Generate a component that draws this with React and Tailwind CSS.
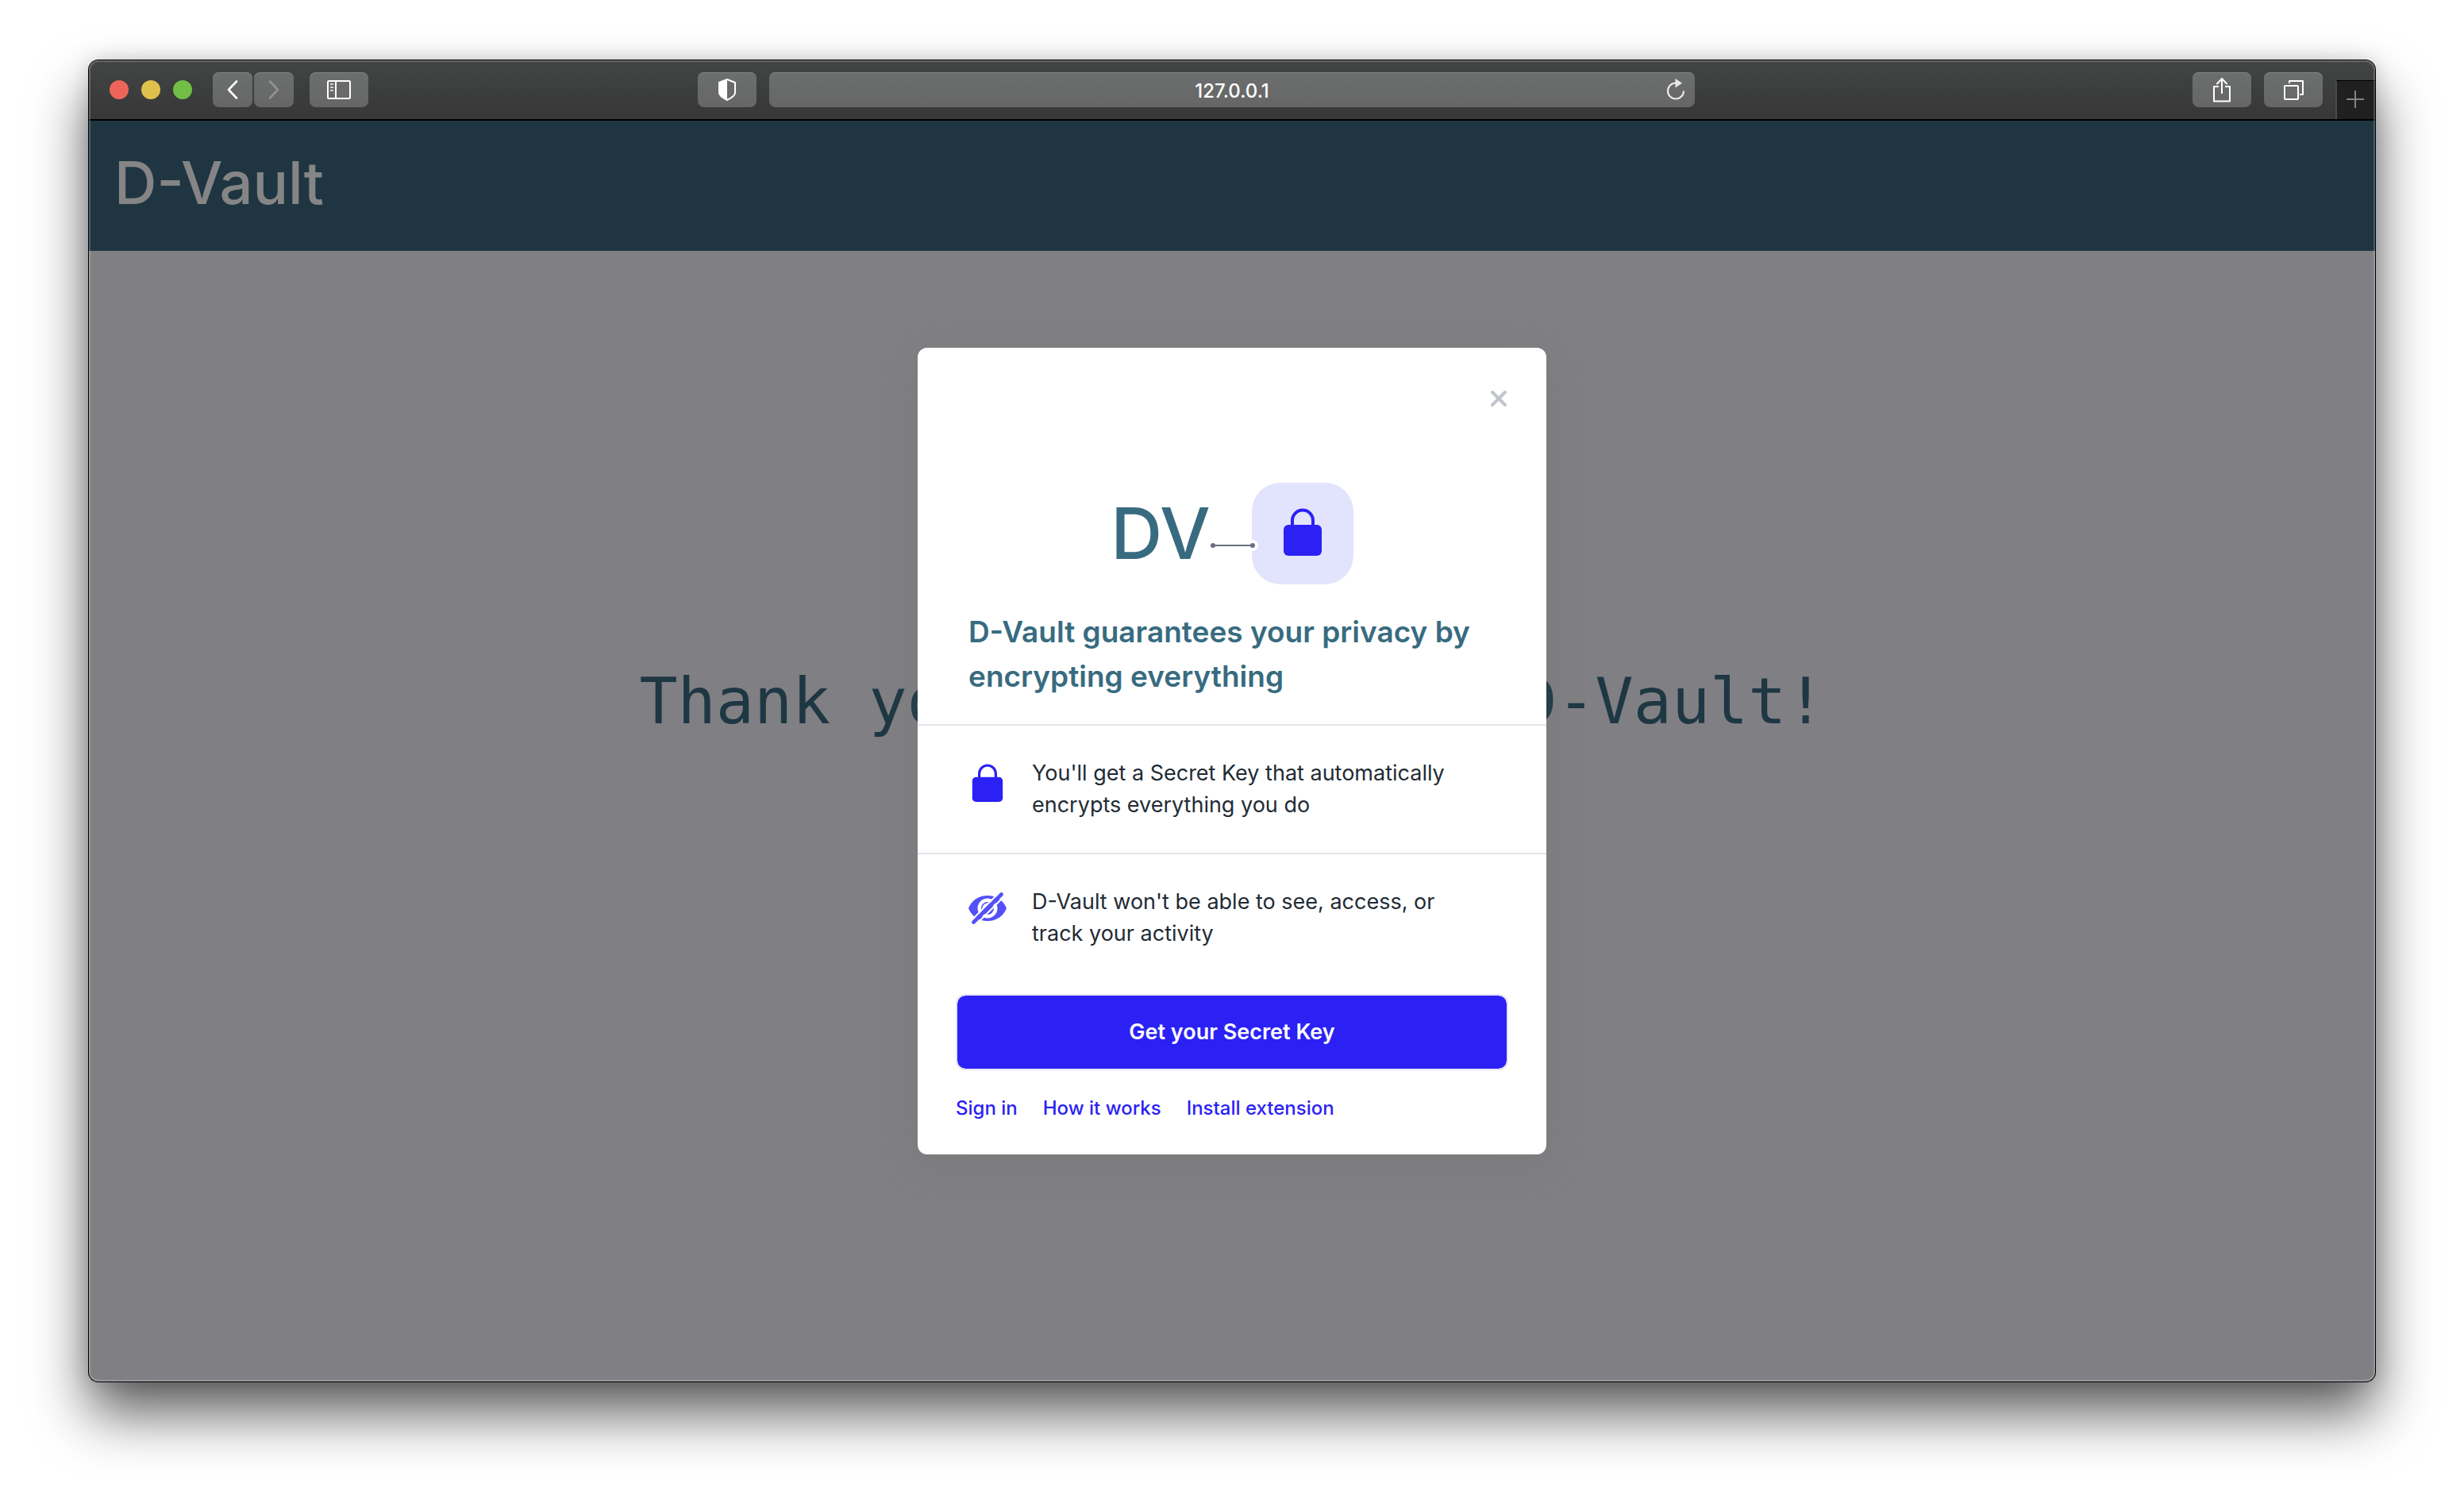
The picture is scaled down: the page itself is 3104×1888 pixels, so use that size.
import React from "react";

const toolButton =
  "flex h-11 items-center justify-center rounded-lg bg-linear-to-b from-[#6d6e6f] to-[#656665] shadow-[inset_0_1px_0_#828383]";

function Lock({ className }) {
  return (
    <svg viewBox="0 0 48 60" className={className} fill="none" aria-hidden="true">
      <path d="M11 24V15.5a13 13 0 0 1 26 0V24" stroke="#2b21f5" strokeWidth="4" />
      <rect x="0" y="21" width="48" height="39" rx="6" fill="#2b21f5" />
    </svg>
  );
}

function EyeOff() {
  return (
    <svg viewBox="0 0 48 40" className="h-10 w-12" fill="none" aria-hidden="true">
      <path
        d="M0 20C4 10 13 4 24 4s20 6 24 16c-4 10-13 16-24 16S4 30 0 20Z"
        fill="#544ff8"
      />
      <circle cx="24" cy="20" r="12.5" fill="#fff" />
      <circle cx="24" cy="20" r="8" fill="#544ff8" />
      <path d="M18.5 20a5.5 5.5 0 0 1 5.5-5.5" stroke="#fff" strokeWidth="2" strokeLinecap="round" />
      <path d="M3 36 39 0M9 41 45 5" stroke="#fff" strokeWidth="2" />
      <path d="M6.5 37.500 41.500 2.500" stroke="#544ff8" strokeWidth="4.600" strokeLinecap="round" />
    </svg>
  );
}

function Toolbar() {
  return (
    <header className="flex h-[76px] items-stretch border-b-2 border-black bg-linear-to-b from-[#434445] to-[#363736]">
      <div className="flex flex-1 items-center pb-px">
        <div className="ml-[26px] flex gap-4">
          <button aria-label="Close window" className="size-6 rounded-full bg-[#ed655a]" />
          <button aria-label="Minimize window" className="size-6 rounded-full bg-[#e0c04c]" />
          <button aria-label="Zoom window" className="size-6 rounded-full bg-[#72be47]" />
        </div>
        <div className="ml-[26px] flex gap-0.5">
          <button aria-label="Back" className={`${toolButton} w-[50px]`}>
            <svg viewBox="0 0 16 26" className="h-[26px] w-4" fill="none">
              <path d="M13 2.5 3 13l10 10.500" stroke="#fff" strokeWidth="2.600" strokeLinecap="round" strokeLinejoin="round" />
            </svg>
          </button>
          <button aria-label="Forward" className={`${toolButton} w-[50px]`}>
            <svg viewBox="0 0 16 26" className="h-[26px] w-4" fill="none">
              <path d="m3 2.500 10 10.500L3 23.500" stroke="#929292" strokeWidth="2.600" strokeLinecap="round" strokeLinejoin="round" />
            </svg>
          </button>
        </div>
        <button aria-label="Sidebar" className={`${toolButton} ml-5 w-[74px]`}>
          <svg viewBox="0 0 30 24" className="h-6 w-[30px]" fill="none">
            <rect x="1" y="1" width="28" height="22" rx="1.500" stroke="#fff" strokeWidth="2" />
            <path d="M11 1v22" stroke="#fff" strokeWidth="2" />
            <path d="M4 5h4M4 9h4M4 13h4" stroke="#d0d0d0" strokeWidth="2" />
          </svg>
        </button>
        <button aria-label="Privacy report" className={`${toolButton} mr-4 ml-auto w-[74px]`}>
          <svg viewBox="0 0 24 28" className="h-7 w-6" fill="none">
            <path d="M12 1 22 5v13c0 3.500-5 6.500-10 9C7 24.500 2 21.500 2 18V5Z" stroke="#fff" strokeWidth="2" strokeLinejoin="round" />
            <path d="M12 1 2 5v13c0 3.500 5 6.500 10 9Z" fill="#fff" />
          </svg>
        </button>
      </div>
      <div className="flex w-[41%] max-w-[1166px] items-center pb-px">
        <div className={`${toolButton} w-full pr-3`}>
          <input
            aria-label="Address"
            defaultValue="127.0.0.1"
            className="min-w-0 flex-1 bg-transparent pt-1 pl-9 text-center text-[24px] leading-8 font-medium text-white outline-none"
          />
          <button aria-label="Reload">
            <svg viewBox="0 0 24 28" className="h-7 w-6" fill="none">
              <path d="M22 15.500A10 10 0 1 1 12 5.500" stroke="#e8e8e8" strokeWidth="2.200" />
              <path d="M11.500 0v11.500L20 5.800Z" fill="#e8e8e8" />
            </svg>
          </button>
        </div>
      </div>
      <div className="flex flex-1 justify-end gap-4">
        <div className="flex items-center gap-4 pb-px">
          <button aria-label="Share" className={`${toolButton} w-[74px]`}>
            <svg viewBox="0 0 24 32" className="h-8 w-6" fill="none" stroke="#fff" strokeWidth="2" strokeLinejoin="round">
              <path d="M8 12H2v18.500h20V12h-6M12 21V3" />
              <path d="m6 8.500 6-6.500 6 6.500" strokeLinecap="round" />
            </svg>
          </button>
          <button aria-label="Tab overview" className={`${toolButton} w-[74px]`}>
            <svg viewBox="0 0 26 26" className="size-[26px]" fill="none" stroke="#fff" strokeWidth="2" strokeLinejoin="round">
              <rect x="2" y="8" width="17" height="17" rx="1" />
              <path d="M8 5V2h17v17h-4" />
            </svg>
          </button>
        </div>
        <button
          aria-label="New tab"
          className="mt-[25px] flex w-[50px] items-center justify-center border-t border-l-2 border-t-black border-l-[#4a4a4a] bg-[#202020] pb-0.5 pr-0.5"
        >
          <svg viewBox="0 0 22 22" className="size-[22px]" fill="none" stroke="#858585" strokeWidth="2">
            <path d="M11 0v22M0 11h22" />
          </svg>
        </button>
      </div>
    </header>
  );
}

function Feature({ icon, children }) {
  return (
    <li className="flex gap-8 border-t-2 border-[#e4e4ea] py-10 pr-20 pl-16">
      <span className="flex w-12 shrink-0 justify-center pt-2">{icon}</span>
      <p className="text-[27px] leading-10 text-[#222b35]">{children}</p>
    </li>
  );
}

function SecretKeyDialog() {
  return (
    <section
      role="dialog"
      aria-labelledby="dialog-title"
      className="relative w-[792px] rounded-xl bg-white pt-[170px] pb-[38px] shadow-[0_12px_48px_rgba(105,115,110,0.3)]"
    >
      <button aria-label="Close" className="absolute top-[52px] right-[48px] p-0.5">
        <svg viewBox="0 0 20 20" className="size-5" fill="none">
          <path d="m2 2 16 16M18 2 2 18" stroke="#c1c4cc" strokeWidth="4" strokeLinecap="round" />
        </svg>
      </button>

      <div className="flex items-center justify-center">
        <span className="text-[90px] leading-[128px] font-medium text-[#386b80]">DV</span>
        <svg viewBox="0 0 60 14" className="relative z-10 mt-[30px] -mr-2 h-3.5 w-[60px]" fill="none" aria-hidden="true">
          <circle cx="53" cy="7" r="7" fill="#fff" />
          <path d="M3 7h50" stroke="#686f83" strokeWidth="2" />
          <circle cx="3" cy="7" r="3" fill="#686f83" />
          <circle cx="53" cy="7" r="3" fill="#686f83" />
        </svg>
        <span className="flex size-32 items-center justify-center rounded-[36px] bg-[#e2e3fc] pb-1">
          <Lock className="h-[60px] w-12" />
        </span>
      </div>

      <h2 id="dialog-title" className="px-16 pt-8 pb-8 text-[37px] leading-14 font-semibold text-[#386b80]">
        D-Vault guarantees your privacy by encrypting everything
      </h2>

      <ul>
        <Feature icon={<Lock className="h-12 w-10" />}>
          You'll get a Secret Key that automatically encrypts everything you do
        </Feature>
        <Feature icon={<EyeOff />}>D-Vault won't be able to see, access, or track your activity</Feature>
      </ul>

      <div className="px-12 pt-4">
        <button className="h-24 w-full rounded-xl border-2 border-[#e4e4f4] bg-[#2b21f5] bg-clip-padding text-[27px] font-semibold text-white">
          Get your Secret Key
        </button>
        <nav className="mt-7 flex gap-8 text-[24px] leading-10 font-medium text-[#2b21f5]">
          <a href="#sign-in">Sign in</a>
          <a href="#how-it-works">How it works</a>
          <a href="#install">Install extension</a>
        </nav>
      </div>
    </section>
  );
}

export default function App() {
  return (
    <div className="flex min-h-screen flex-col bg-white px-28 pt-[76px] pb-[148px] font-[Inter,sans-serif]">
      <div className="relative flex flex-1 flex-col overflow-hidden rounded-xl bg-[#807f83] shadow-[0_0_0_1px_#000,0_0_24px_rgba(0,0,0,0.16),0_40px_70px_rgba(0,0,0,0.64)]">
        <Toolbar />
        <div className="relative flex flex-1 flex-col">
          <div className="flex h-[164px] items-center bg-[#1f3642] px-8 pb-2">
            <h1 className="text-[74px] leading-none font-medium text-[#858585]">D-Vault</h1>
          </div>
          <main className="flex flex-1 justify-center pt-[520px]">
            <p className="font-['DejaVu_Sans_Mono',monospace] text-[80px] leading-[96px] whitespace-nowrap text-[#1d3743]">
              Thank you for choosing D-Vault!
            </p>
          </main>
          <div className="absolute inset-0 flex items-center justify-center">
            <SecretKeyDialog />
          </div>
        </div>
        <div className="pointer-events-none absolute inset-0 rounded-xl border-2 border-white/20" />
      </div>
    </div>
  );
}
